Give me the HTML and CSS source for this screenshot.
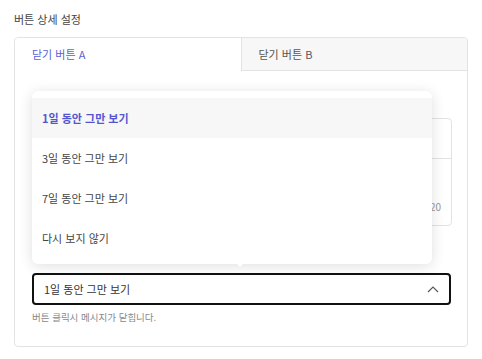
FILE: index.html
```html
<!DOCTYPE html>
<html lang="ko">
<head>
<meta charset="utf-8">
<link rel="stylesheet" href="styles.css">
</head>
<body>
<div class="page">
  <div class="title">버튼 상세 설정</div>
  <div class="card">
    <div class="tabs">
      <div class="tab active">닫기 버튼 A</div>
      <div class="tab">닫기 버튼 B</div>
    </div>
    <div class="body">
      <div class="textbox">
        <div class="tb-top"></div>
        <div class="tb-bottom"><span class="count">0/20</span></div>
      </div>
      <div class="select-wrap">
        <div class="menu">
          <div class="item selected">1일 동안 그만 보기</div>
          <div class="item">3일 동안 그만 보기</div>
          <div class="item">7일 동안 그만 보기</div>
          <div class="item">다시 보지 않기</div>
        </div>
        <div class="caret"></div>
        <div class="select">
          <span>1일 동안 그만 보기</span>
          <svg class="chev" width="12" height="7" viewBox="0 0 12 7"><path d="M1 6 L6 1 L11 6" fill="none" stroke="#555" stroke-width="1.1"/></svg>
        </div>
      </div>
      <div class="help">버튼 클릭시 메시지가 닫힙니다.</div>
    </div>
  </div>
</div>
</body>
</html>
```
FILE: styles.css
```css
* { box-sizing: border-box; }
html, body { margin: 0; padding: 0; background: #fff; }
body { font-family: "Noto Sans CJK KR", "Noto Sans", sans-serif; color: #333; }
.page { padding: 11px 14px 0 14px; width: 482px; }
.title { font-size: 11px; line-height: 16px; color: #444; height: 26px; }
.card { border: 1px solid #e3e3e3; border-radius: 4px; height: 310px; position: relative; }
.tabs { display: flex; height: 33px; }
.tab { flex: 1; font-size: 11px; line-height: 32px; padding-left: 17px; color: #555; background: #f7f7f7; border-left: 1px solid #e3e3e3; border-bottom: 1px solid #e3e3e3; border-top-right-radius: 4px; }
.tab.active { background: #fff; color: #5b5fd6; border: none; border-top-left-radius: 4px; border-top-right-radius: 0; }
.body { padding: 47px 16px 0 17px; }
.textbox { border: 1px solid #e3e3e3; border-radius: 4px; height: 108px; margin-right: -1px; display: flex; flex-direction: column; }
.tb-top { height: 40px; border-bottom: 1px solid #e3e3e3; }
.tb-bottom { flex: 1; display: flex; align-items: flex-end; justify-content: flex-end; padding: 0 10px 12px 0; }
.count { font-size: 10px; color: #999; line-height: 12px; }
.select-wrap { position: relative; margin-top: 47px; }
.select { height: 32px; border: 2px solid #111; border-radius: 4px; display: flex; align-items: center; justify-content: space-between; padding: 0 10px 0 10px; font-size: 11px; color: #333; }
.chev { display: block; }
.menu { position: absolute; left: 0; bottom: calc(100% + 9px); width: 400px; background: #fff; border-radius: 6px; box-shadow: 0 2px 14px rgba(0,0,0,0.13); padding: 7px 0 6px; z-index: 2; }
.item { height: 40px; line-height: 40px; padding-left: 10px; font-size: 11px; color: #444; }
.item.selected { background: #f7f7f7; color: #5456d0; font-weight: 600; }
.caret { position: absolute; left: 205px; bottom: calc(100% + 6px); width: 0; height: 0; border-left: 3px solid transparent; border-right: 3px solid transparent; border-top: 3px solid #fff; z-index: 3; }
.help { font-size: 9.5px; color: #888; margin-top: 5px; line-height: 14px; }
```
